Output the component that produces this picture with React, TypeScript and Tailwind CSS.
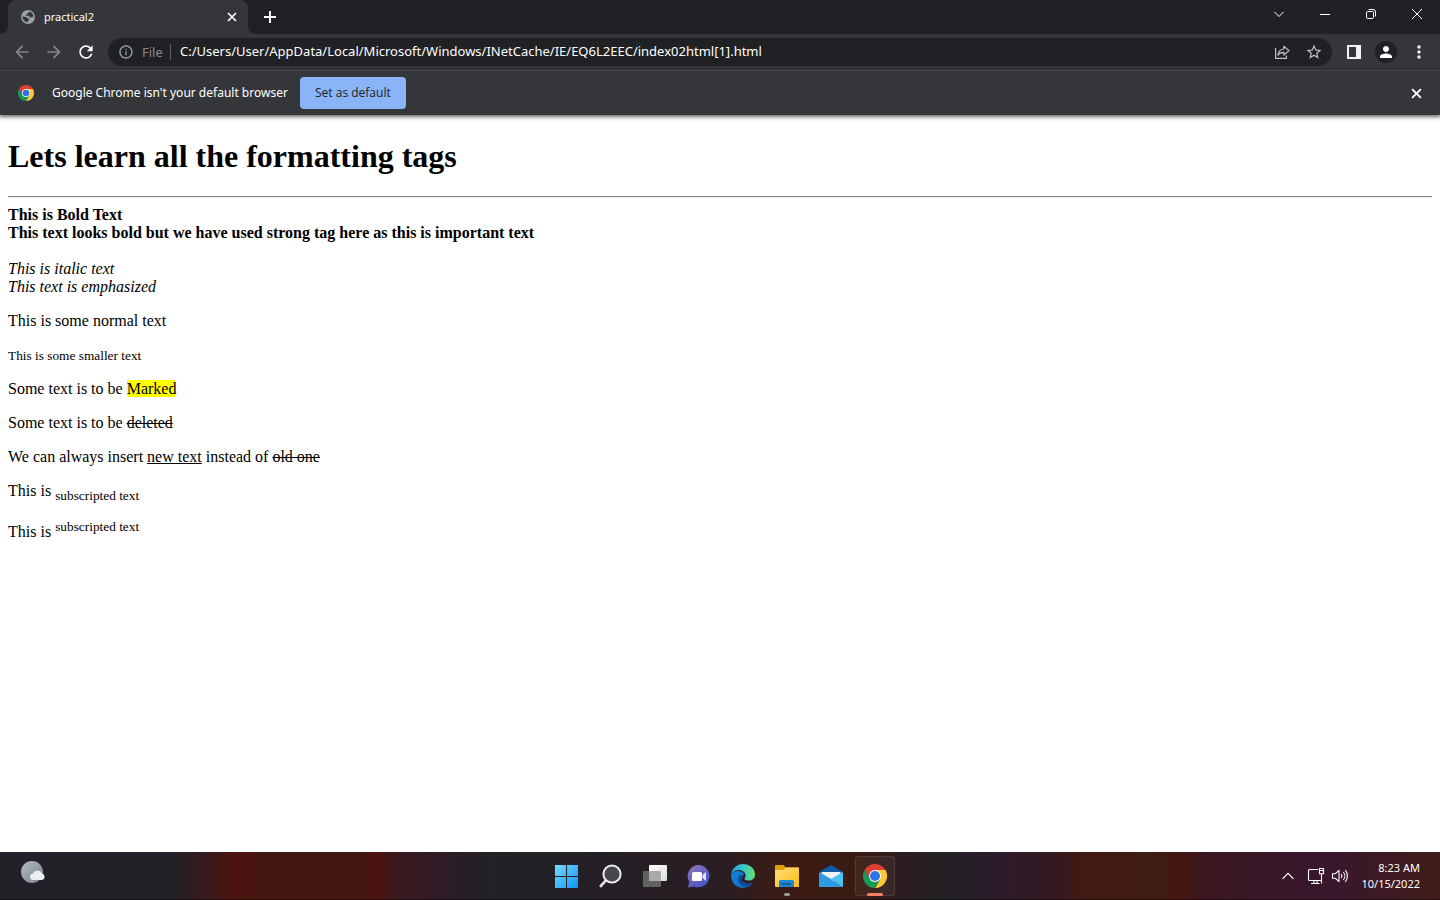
import type { ReactNode } from 'react';
import {
  MdArrowBack,
  MdArrowForward,
  MdRefresh,
  MdInfoOutline,
  MdStarBorder,
  MdPerson,
  MdMoreVert,
} from 'react-icons/md';

function ChromeLogo({ className }: { className: string }) {
  return (
    <svg viewBox="0 0 48 48" className={className} aria-hidden="true">
      <path d="M24 24 44.8 12A24 24 0 0 0 3.2 12l10.4 18Z" fill="#dd3f32" />
      <path d="M24 12h20.8A24 24 0 0 1 24 48l10.4-18Z" fill="#fdca35" />
      <path d="M3.2 12A24 24 0 0 0 24 48l10.4-18H24L13.6 30Z" fill="#189a54" />
      <circle cx="24" cy="24" r="12" fill="#fff" />
      <circle cx="24" cy="24" r="10" fill="#2f72e4" />
    </svg>
  );
}

function GlobeIcon({ className }: { className: string }) {
  return (
    <svg viewBox="0 0 16 16" className={className} aria-hidden="true">
      <circle cx="8" cy="8" r="7" fill="#9aa0a6" />
      <path
        d="M9 2.500c.3 1.200-.6 1.800-1.800 2-.2.900-.7 1.300-1.600 1.300.1.700.4 1 1.200 1h2c.8.300.8 1 .8 1.700.8.300 1.300.1 1.800-.5.600-.3 1.300-.3 2 .2A5.800 5.800 0 0 0 9 2.500ZM2.400 7.600c.2 3 2 5.300 5.200 6v-1.700c1.100-.1 1.500-.8 1.500-1.700-.9-.2-1.400-.6-1.700-1.500-1.600-.8-3.300-1.100-5-1.100Z"
        fill="#35363a"
      />
    </svg>
  );
}

function CloseGlyph({ className }: { className: string }) {
  return (
    <svg viewBox="0 0 10 10" className={className} fill="none" stroke="currentColor" strokeWidth="1.700" aria-hidden="true">
      <path d="m1 1 8 8M9 1 1 9" />
    </svg>
  );
}

function TabStrip() {
  return (
    <div className="flex h-[34px] justify-between bg-[#202124] text-white">
      <div className="flex items-end">
        <span className="size-2 bg-[#35363a]">
          <span className="block size-2 rounded-br-lg bg-[#202124]" />
        </span>
        <div className="flex h-[34px] w-[240px] items-center rounded-t-lg bg-[#35363a] pr-2 pl-3">
          <GlobeIcon className="size-4" />
          <span className="ml-2 flex-1 text-[11px]">practical2</span>
          <button aria-label="Close tab" className="flex size-4 items-center justify-center">
            <CloseGlyph className="size-[10px]" />
          </button>
        </div>
        <span className="size-2 bg-[#35363a]">
          <span className="block size-2 rounded-bl-lg bg-[#202124]" />
        </span>
        <button aria-label="New tab" className="flex h-[34px] w-7 items-center justify-center">
          <svg viewBox="0 0 12 12" className="size-3" stroke="currentColor" strokeWidth="2" aria-hidden="true">
            <path d="M6 0v12M0 6h12" />
          </svg>
        </button>
      </div>
      <div className="flex h-7">
        <button aria-label="Search tabs" className="flex w-[46px] items-center justify-center">
          <svg viewBox="0 0 10 10" className="size-[10px]" fill="none" stroke="currentColor" aria-hidden="true">
            <path d="m.3 2.8 4.7 4.7 4.7-4.7" />
          </svg>
        </button>
        <button aria-label="Minimize" className="flex w-[46px] items-center justify-center">
          <svg viewBox="0 0 10 10" className="size-[10px]" stroke="currentColor" aria-hidden="true">
            <path d="M0 5.5h10" />
          </svg>
        </button>
        <button aria-label="Restore" className="flex w-[46px] items-center justify-center">
          <svg viewBox="0 0 10 10" className="size-[10px]" fill="none" stroke="currentColor" aria-hidden="true">
            <rect x=".5" y="2.5" width="7" height="7" rx="1.2" />
            <path d="M2.5.5H7A2.5 2.5 0 0 1 9.5 3v4.5" />
          </svg>
        </button>
        <button aria-label="Close window" className="flex w-[46px] items-center justify-center">
          <svg viewBox="0 0 10 10" className="size-[10px]" fill="none" stroke="currentColor" aria-hidden="true">
            <path d="m0 0 10 10M10 0 0 10" />
          </svg>
        </button>
      </div>
    </div>
  );
}

function Toolbar() {
  return (
    <div className="flex h-[37px] items-center border-b border-[#5f6063] bg-[#35363a] pr-[9px] pl-2 text-[#85878a]">
      <button aria-label="Back" className="flex w-7 justify-center">
        <MdArrowBack className="size-5" />
      </button>
      <button aria-label="Forward" className="ml-1 flex w-7 justify-center">
        <MdArrowForward className="size-5" />
      </button>
      <button aria-label="Reload" className="ml-1 flex w-7 justify-center text-white">
        <MdRefresh className="size-5" />
      </button>
      <div className="ml-2 flex h-7 flex-1 items-center rounded-full bg-[#202124] pr-[10px] pl-[10px]">
        <MdInfoOutline className="size-4 text-[#9aa0a6]" />
        <label htmlFor="address" className="ml-2 w-[29px] border-r border-[#5f6368] text-[13px] leading-4 text-[#85898e]">
          File
        </label>
        <input
          id="address"
          type="text"
          className="ml-[9px] min-w-0 flex-1 bg-transparent text-[13px] text-white outline-none"
          defaultValue="C:/Users/User/AppData/Local/Microsoft/Windows/INetCache/IE/EQ6L2EEC/index02html[1].html"
        />
        <button aria-label="Share this page" className="flex w-4 justify-center text-[#bdc1c6]">
          <svg viewBox="0 0 16 16" className="size-4" fill="none" stroke="currentColor" strokeWidth="1.2" aria-hidden="true">
            <path d="M1.6 4v10.4h10.8v-2.8" />
            <path d="M9.8 5V2.2L15 6.6 9.8 11V8.4C7 8.4 5.200 9.200 3.800 11.200 4.200 8 5.800 5.400 9.800 5Z" strokeLinejoin="round" />
          </svg>
        </button>
        <button aria-label="Bookmark this tab" className="ml-4 flex w-4 justify-center text-[#bdc1c6]">
          <MdStarBorder className="size-[18px] shrink-0" />
        </button>
      </div>
      <button aria-label="Side panel" className="ml-2 flex w-7 justify-center text-[#f1f3f4]">
        <svg viewBox="0 0 14 14" className="size-[14px]" aria-hidden="true">
          <path d="M0 0h14v14H0ZM2 2v10h7V2Z" fill="currentColor" fillRule="evenodd" />
        </svg>
      </button>
      <button aria-label="Profile" className="ml-[7px] flex size-[22px] items-center justify-center rounded-full bg-[#202124] text-white">
        <MdPerson className="size-[18px]" />
      </button>
      <button aria-label="Menu" className="ml-[10px] flex w-6 justify-center text-[#f1f3f4]">
        <MdMoreVert className="size-5" />
      </button>
    </div>
  );
}

function DefaultBrowserBar() {
  return (
    <div className="relative flex h-11 items-center bg-[#35363a] px-[18px] text-white shadow-[0_1px_4px_1px_rgba(0,0,0,0.6)]">
      <ChromeLogo className="size-4" />
      <p className="ml-[18px] text-[12px]">Google Chrome isn't your default browser</p>
      <button className="ml-3 h-8 w-[106px] rounded bg-[#8ab4f8] font-['Segoe_UI','Open_Sans',sans-serif] text-[12px] text-[#202124]">
        Set as default
      </button>
      <button aria-label="Dismiss" className="ml-auto flex w-3 justify-center">
        <CloseGlyph className="size-[11px]" />
      </button>
    </div>
  );
}

function Document() {
  return (
    <main className="flex-1 px-2 pt-[23px] font-['Liberation_Serif','Times_New_Roman',serif] text-[16px] leading-[18px] text-black">
      <h1 className="text-[32px] leading-[37px] font-bold">Lets learn all the formatting tags</h1>
      <hr className="mt-[21px] mb-2 border-t border-b border-t-[#888888] border-b-[#eeeeee]" />
      <b>This is Bold Text</b>
      <br />
      <strong>This text looks bold but we have used strong tag here as this is important text</strong>
      <br />
      <br />
      <i>This is italic text</i>
      <br />
      <em>This text is emphasized</em>
      <p className="mt-4">This is some normal text</p>
      <p className="mt-4">
        <small className="[font-size:smaller] leading-[15px]">This is some smaller text</small>
      </p>
      <p className="mt-4">
        Some text is to be <mark className="bg-[#ffff00]">Marked</mark>
      </p>
      <p className="mt-4">
        Some text is to be <del>deleted</del>
      </p>
      <p className="mt-4">
        We can always insert <ins>new text</ins> instead of <del>old one</del>
      </p>
      <p className="mt-4">
        This is <sub className="static align-sub [font-size:smaller] leading-[15px]">subscripted text</sub>
      </p>
      <p className="mt-4">
        This is <sup className="static align-super [font-size:smaller] leading-[15px]">subscripted text</sup>
      </p>
    </main>
  );
}

function TaskButton({ label, active, open, children }: { label: string; active?: boolean; open?: boolean; children: ReactNode }) {
  return (
    <button
      aria-label={label}
      className={
        active
          ? 'relative flex size-10 items-center justify-center rounded border border-white/10 bg-white/5'
          : 'relative flex size-10 items-center justify-center'
      }
    >
      {children}
      {active && <span className="absolute -bottom-px h-[3px] w-4 rounded-full bg-[#f5806a]" />}
      {open && <span className="absolute bottom-0 h-[3px] w-[6px] rounded-full bg-[#a09a98]" />}
    </button>
  );
}

function Taskbar() {
  return (
    <footer className="grid h-12 grid-cols-[1fr_auto_1fr] items-center border-b border-black/40 bg-[linear-gradient(90deg,#232127_0%,#232127_12%,#391a1c_14.5%,#4d130e_16.3%,#441610_18%,#451711_25%,#4b1410_26.2%,#3a1a1e_27.500%,#311b27_30%,#232226_34%,#241f26_42%,#2a1e22_50%,#3c1b13_54.500%,#381b14_60%,#2c1d20_62.500%,#232226_65.500%,#2f1b2a_70%,#35191f_73.500%,#421a13_75.200%,#3e1c13_80.500%,#471511_82%,#3b1720_83.500%,#381828_87.500%,#3a172c_93%,#3f1d18_100%)] text-white">
      <button aria-label="Weather" className="ml-5 w-7 justify-self-start pb-2">
        <svg viewBox="0 0 26 24" className="h-6 w-[26px]" aria-hidden="true">
          <defs>
            <linearGradient id="moon" x1="0" y1="0" x2="1" y2="1">
              <stop offset="0" stopColor="#b3bac2" />
              <stop offset="1" stopColor="#79828b" />
            </linearGradient>
          </defs>
          <circle cx="12" cy="12" r="11" fill="url(#moon)" />
          <path d="M13.300 20a3.100 3.100 0 0 1-.4-6.200 5 5 0 0 1 9.200-.4A3.400 3.400 0 0 1 22 20Z" fill="#eceff2" />
        </svg>
      </button>
      <nav aria-label="Pinned apps" className="flex gap-1 pl-[2px]">
        <TaskButton label="Start">
          <svg viewBox="0 0 24 24" className="size-6" aria-hidden="true">
            <defs>
              <linearGradient id="win" x1="0" y1="0" x2="24" y2="24" gradientUnits="userSpaceOnUse">
                <stop offset="0" stopColor="#7adcff" />
                <stop offset="1" stopColor="#0a94f4" />
              </linearGradient>
            </defs>
            <path d="M0 1h11v11H0ZM12 1h11v11H12ZM0 13h11v11H0ZM12 13h11v11H12Z" fill="url(#win)" />
          </svg>
        </TaskButton>
        <TaskButton label="Search">
          <svg viewBox="0 0 24 24" className="size-6" fill="none" aria-hidden="true">
            <path d="M7.300 16 1.800 22" stroke="#dedede" strokeWidth="2.600" strokeLinecap="round" />
            <circle cx="13" cy="10" r="8.600" fill="#4a474c" stroke="#ededed" strokeWidth="2" />
          </svg>
        </TaskButton>
        <TaskButton label="Task view">
          <svg viewBox="0 0 24 24" className="size-6" aria-hidden="true">
            <defs>
              <linearGradient id="pane" x1="0" y1="0" x2="1" y2="1">
                <stop offset="0" stopColor="#ffffff" />
                <stop offset="1" stopColor="#dcdcdc" />
              </linearGradient>
            </defs>
            <rect x="6" y="1" width="18" height="16" rx="1" fill="url(#pane)" />
            <path d="M1 7h5v10h12v5a1 1 0 0 1-1 1H1a1 1 0 0 1-1-1V8a1 1 0 0 1 1-1Z" fill="#626163" />
            <path d="M6 7h11a1 1 0 0 1 1 1v9H6Z" fill="#aaa9aa" />
          </svg>
        </TaskButton>
        <TaskButton label="Chat">
          <svg viewBox="0 0 24 24" className="size-6" aria-hidden="true">
            <defs>
              <linearGradient id="chat" x1="0" y1="0" x2=".7" y2="1">
                <stop offset="0" stopColor="#a06fae" />
                <stop offset=".45" stopColor="#7069c4" />
                <stop offset="1" stopColor="#4850c0" />
              </linearGradient>
            </defs>
            <path d="M12.300 1A11.200 11.200 0 1 1 7 22.500L1 23.500l1.300-5.500A11.200 11.200 0 0 1 12.300 1Z" fill="url(#chat)" />
            <rect x="5" y="8" width="10" height="9" rx="1.500" fill="#fff" />
            <path d="m16 11 2.500-2.200v7.400L16 14Z" fill="#dfe0f5" stroke="#dfe0f5" strokeLinejoin="round" />
          </svg>
        </TaskButton>
        <TaskButton label="Edge">
          <svg viewBox="0 0 24 24" className="size-6" aria-hidden="true">
            <defs>
              <linearGradient id="edgeTop" x1="0" y1=".4" x2="1" y2=".4">
                <stop offset="0" stopColor="#239fe2" />
                <stop offset=".5" stopColor="#36c6cd" />
                <stop offset="1" stopColor="#67e169" />
              </linearGradient>
              <linearGradient id="edgeBody" x1="0" y1="0" x2="1" y2="1">
                <stop offset="0" stopColor="#1488dd" />
                <stop offset="1" stopColor="#0b62b4" />
              </linearGradient>
            </defs>
            <path d="M.2 10.500C4.500 5.500 11 6.500 13 10L10 16c1 4 7 5.500 12 2.300A12 12 0 0 1 12 24C5 24-.5 18 .2 10.500Z" fill="url(#edgeBody)" />
            <path d="M8.500 10.500C5.500 15 8 21.500 13.500 22.500c3.500.5 7-1.500 8.800-4.100-4.200 2.200-10.300 1.500-11.600-2.900-.3-1.500.2-3 1.600-4Z" fill="#0b4c98" />
            <path d="M.2 10.500C1 4.500 5.800 0 12 0c6.500 0 12 4.500 12 10.500 0 4-3 6-6.500 6-2.500 0-4-.8-4-1.700 0-.7 1.200-1.200 1.200-3.200C14.700 8.500 11.500 6 8 6 4.500 6 1.700 7.800.2 10.500Z" fill="url(#edgeTop)" />
          </svg>
        </TaskButton>
        <TaskButton label="File Explorer" open>
          <svg viewBox="0 0 24 24" className="size-6" aria-hidden="true">
            <defs>
              <linearGradient id="folder" x1="0" y1="0" x2="1" y2="1">
                <stop offset="0" stopColor="#ffe07a" />
                <stop offset="1" stopColor="#fbbb14" />
              </linearGradient>
            </defs>
            <path d="M1 1h7.500L11 3.500h12a1 1 0 0 1 1 1V8H0V2a1 1 0 0 1 1-1Z" fill="#e0a008" />
            <path d="M0 6h8.500L11 3.500h12a1 1 0 0 1 1 1V23H1a1 1 0 0 1-1-1Z" fill="url(#folder)" />
            <path d="M4 23v-5.500A1.500 1.500 0 0 1 5.500 16h12a1.500 1.500 0 0 1 1.500 1.500V23Z" fill="#1d86d4" />
            <path d="M7 19h9v2H7Z" fill="#0b5b9d" />
          </svg>
        </TaskButton>
        <TaskButton label="Mail">
          <svg viewBox="0 0 24 24" className="size-6" aria-hidden="true">
            <path d="M0 8 12 1l12 7v8H0Z" fill="#0e5ba8" />
            <path d="M2.500 8h19v9h-19Z" fill="#f0f1f4" />
            <path d="M0 8v14a1 1 0 0 0 1 1h22L12 15Z" fill="#2b9ce4" />
            <path d="M24 8v14a1 1 0 0 1-1 1L12 15Z" fill="#4cc3f5" />
          </svg>
        </TaskButton>
        <TaskButton label="Google Chrome" active>
          <ChromeLogo className="size-6" />
        </TaskButton>
      </nav>
      <div className="flex items-center justify-self-end pr-5">
        <button aria-label="Hidden icons" className="flex w-[14px] justify-center">
          <svg viewBox="0 0 12 8" className="h-2 w-3" fill="none" stroke="currentColor" strokeWidth="1.200" aria-hidden="true">
            <path d="M.5 6.800 6 1.300l5.500 5.500" />
          </svg>
        </button>
        <button aria-label="Network" className="ml-3 flex">
          <svg viewBox="0 0 18 18" className="size-[18px]" fill="none" stroke="currentColor" strokeWidth="1.100" aria-hidden="true">
            <path d="M11 2.500H2.500a1 1 0 0 0-1 1v9a1 1 0 0 0 1 1H14M7 13.500v3M10 13.500v3M4 16.500h8.500" />
            <path d="M12.500 1.500h4v5.200h-4ZM12.500 3.500h4M14.500 6.700v9.800" />
          </svg>
        </button>
        <button aria-label="Volume" className="ml-[6px] flex">
          <svg viewBox="0 0 18 18" className="size-[18px]" fill="none" stroke="currentColor" strokeWidth="1.100" strokeLinejoin="round" aria-hidden="true">
            <path d="M1.500 6.800h2.700L8 3.300v11.400l-3.800-3.500H1.500Z" />
            <path d="M10.300 7a3.500 3.500 0 0 1 0 4M12.300 5a6 6 0 0 1 0 8M14.300 3.200a9 9 0 0 1 0 11.600" />
          </svg>
        </button>
        <time dateTime="2022-10-15T08:23" className="ml-3 text-right text-[11px] leading-4">
          8:23 AM
          <br />
          10/15/2022
        </time>
      </div>
    </footer>
  );
}

export default function App() {
  return (
    <div className="flex min-h-screen flex-col bg-white font-['Segoe_UI','Noto_Sans',sans-serif]">
      <TabStrip />
      <Toolbar />
      <DefaultBrowserBar />
      <Document />
      <Taskbar />
    </div>
  );
}
